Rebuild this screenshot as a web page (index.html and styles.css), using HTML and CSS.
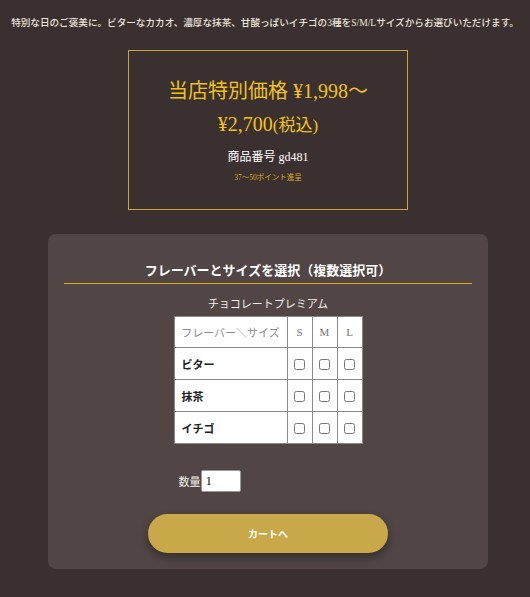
FILE: index.html
```html
<!DOCTYPE html>
<html lang="ja">
<head>
<meta charset="utf-8">
<link rel="stylesheet" href="styles.css">
</head>
<body>
<p class="lead">特別な日のご褒美に。ビターなカカオ、濃厚な抹茶、甘酸っぱいイチゴの3種をS/M/Lサイズからお選びいただけます。</p>
<div class="main">
  <div class="price-box">
    <div class="price">当店特別価格 ¥1,998〜<br>¥2,700<span class="tax">(税込)</span></div>
    <div class="code">商品番号 gd481</div>
    <div class="points">37〜50ポイント進呈</div>
  </div>
  <div class="card">
    <h2 class="card-title">フレーバーとサイズを選択（複数選択可）</h2>
    <div class="product-name">チョコレートプレミアム</div>
    <table class="grid">
      <tr class="head">
        <th class="label-col">フレーバー＼サイズ</th>
        <th>S</th><th>M</th><th>L</th>
      </tr>
      <tr>
        <td class="label-col flavor">ビター</td>
        <td><input type="checkbox"></td><td><input type="checkbox"></td><td><input type="checkbox"></td>
      </tr>
      <tr>
        <td class="label-col flavor">抹茶</td>
        <td><input type="checkbox"></td><td><input type="checkbox"></td><td><input type="checkbox"></td>
      </tr>
      <tr>
        <td class="label-col flavor">イチゴ</td>
        <td><input type="checkbox"></td><td><input type="checkbox"></td><td><input type="checkbox"></td>
      </tr>
    </table>
    <div class="qty-row">
      <span class="qty-label">数量</span><input class="qty-input" type="text" value="1">
    </div>
    <button class="cart-btn" type="button">カートへ</button>
  </div>
</div>
</body>
</html>
```

FILE: styles.css
```css
* { box-sizing: border-box; }
html, body {
  margin: 0;
  padding: 0;
  background: #3b3030;
}
body {
  font-family: "Liberation Serif", "Noto Sans CJK JP", serif;
  color: #f2ece6;
}
.lead {
  margin: 15px 0 0;
  font-size: 9.6px;
  line-height: 15px;
  text-align: center;
  color: #ece4dc;
  font-weight: 500;
}
.main {
  padding-left: 6px;
}
.price-box {
  width: 280px;
  margin: 20px auto 0;
  border: 1px solid #c9a53a;
  padding: 24px 10px 25px;
  text-align: center;
}
.price {
  font-size: 20px;
  line-height: 33px;
  color: #f1c21c;
}
.price .tax {
  font-size: 17px;
}
.code {
  margin-top: 6px;
  font-size: 12px;
  line-height: 18px;
  color: #ffffff;
}
.points {
  margin-top: 6px;
  font-size: 7.5px;
  line-height: 12px;
  color: #d9ac1e;
}
.card {
  width: 440px;
  margin: 24px auto 0;
  background: #514545;
  border-radius: 8px;
  padding: 16px;
  text-align: center;
}
.card-title {
  margin: 11px 0 0;
  padding-bottom: 2px;
  font-size: 13px;
  line-height: 20px;
  font-weight: bold;
  color: #ffffff;
  border-bottom: 1px solid #e2b01c;
}
.product-name {
  margin-top: 11px;
  font-size: 11px;
  line-height: 18px;
  color: #f4eee8;
}
.grid {
  margin: 3px auto 0;
  border-collapse: collapse;
  background: #ffffff;
  border: 1px solid #8a8a8a;
}
.grid th, .grid td {
  border: 1px solid #8a8a8a;
  height: 32px;
  padding: 0;
  text-align: center;
}
.grid th {
  height: 31px;
  font-weight: normal;
  font-size: 11px;
  color: #777777;
  width: 25px;
}
.grid th.label-col {
  width: 113px;
  color: #8c8c8c;
}
.grid td.flavor {
  text-align: left;
  padding-left: 7px;
  font-size: 11px;
  font-weight: bold;
  color: #222222;
}
.grid input[type="checkbox"] {
  width: 11px;
  height: 11px;
  margin: 0;
  vertical-align: middle;
}
.qty-row {
  width: 187px;
  margin: 26px auto 0;
  padding-left: 4px;
  display: flex;
  align-items: center;
  text-align: left;
}
.qty-label {
  font-size: 11px;
  color: #f4eee8;
}
.qty-input {
  width: 40px;
  height: 22px;
  border: 1px solid #999;
  border-radius: 2px;
  padding: 0 4px;
  font-family: "Liberation Serif", "Noto Sans CJK JP", serif;
  font-size: 13px;
  color: #222;
  background: #fff;
}
.cart-btn {
  display: block;
  width: 240px;
  height: 39px;
  margin: 22px auto 0;
  border: none;
  border-radius: 20px;
  background: #c9a84a;
  color: #ffffff;
  font-family: "Liberation Serif", "Noto Sans CJK JP", serif;
  font-size: 10px;
  font-weight: bold;
  box-shadow: 0 4px 10px rgba(0, 0, 0, 0.35);
}
```
